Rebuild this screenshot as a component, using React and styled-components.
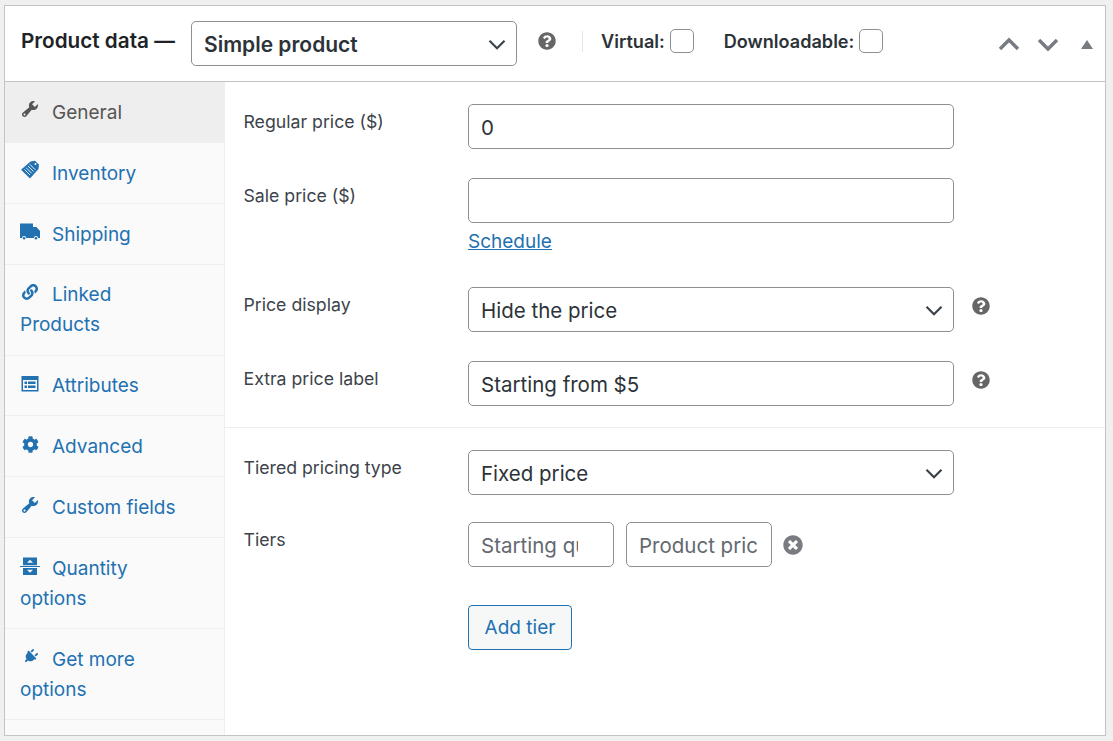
import styled, { createGlobalStyle } from 'styled-components'
import { FaQuestionCircle, FaTimesCircle, FaCog, FaLink, FaPlug } from 'react-icons/fa'

const GlobalStyle = createGlobalStyle`
    html, body {
        margin: 0;
        padding: 0;
        background: #f0f0f1;
        font-family: Inter, "Liberation Sans", sans-serif;
        color: #1d2327;
    }
`

const WrenchIcon = () => (
    <svg viewBox='0 0 20 20' width='20' height='20' fill='currentColor'>
        <path d='M16.68 9.77c-1.34 1.34-3.3 1.67-4.95.99l-5.41 6.52c-.99.99-2.59.99-3.58 0s-.99-2.59 0-3.57l6.52-5.42c-.68-1.65-.35-3.61.99-4.95 1.28-1.28 3.12-1.62 4.72-1.06l-2.89 2.89 2.82 2.82 2.86-2.87c.53 1.58.18 3.39-1.08 4.65zM3.81 16.21c.4.39 1.04.39 1.43 0 .4-.4.4-1.04 0-1.43-.39-.4-1.03-.4-1.43 0-.39.39-.39 1.03 0 1.43z' />
    </svg>
)

const TagIcon = () => (
    <svg viewBox='0 0 20 20' width='20' height='20'>
        <path fill='currentColor' d='M10.500 1.500L15 .800 19 4.500 18.500 9 10 18.500 1 9.800Z' />
        <path stroke='#fafafa' strokeWidth='.9' d='M4.500 9.500L10 15M6.200 7.800L11.700 13.300M8 6L13.500 11.500M9.800 4.300L15.300 9.800' />
        <circle cx='15.500' cy='4' r='1' fill='#fafafa' />
    </svg>
)

const TruckIcon = () => (
    <svg viewBox='0 -1 20 20' width='20' height='20' fill='currentColor'>
        <path d='M0 1.500h13v3.500h3.400l3.600 4v7h-2a2.100 2.100 0 0 0-4.200 0H6.200a2.100 2.100 0 0 0-4.200 0H0z' />
        <circle cx='4.100' cy='16.300' r='1.300' />
        <circle cx='15.900' cy='16.300' r='1.300' />
    </svg>
)

const ListIcon = () => (
    <svg viewBox='0 -1 20 20' width='20' height='20'>
        <path fill='currentColor' d='M1.500 2h17v15.500h-17z' />
        <path fill='#fafafa' d='M3 6h14v10H3z' />
        <path fill='currentColor' d='M4.500 7.500h2.500V10H4.500zM8 7.500h7.500V10H8zM4.500 11.500h2.500V14H4.500zM8 11.500h7.500V14H8z' />
    </svg>
)

const QuantityIcon = () => (
    <svg viewBox='0 -1 20 20' width='20' height='20'>
        <path fill='currentColor' d='M3 .500h14v7.700H3zM3 11h14v7H3zM0 9h20v1H0z' />
        <path fill='#fafafa' d='M10 2.800l3 3H7zM10 15.800l-3-3h6z' />
    </svg>
)

const Chevron = ({ up, size = 24, color = '#787c82', weight = 3.4 }) => (
    <svg viewBox='0 0 24 24' width={size} height={size} fill='none'>
        <path
            stroke={color}
            strokeWidth={weight}
            d={up ? 'M3 17 L12 8 L21 17' : 'M3 8 L12 17 L21 8'}
        />
    </svg>
)

const GearIcon = styled(FaCog)`
    margin-top: 2px;
`

const PlugIcon = styled(FaPlug)`
    transform: rotate(45deg);
`

const tabs = [
    { label: 'General', icon: <WrenchIcon />, active: true },
    { label: 'Inventory', icon: <TagIcon /> },
    { label: 'Shipping', icon: <TruckIcon /> },
    { label: 'Linked Products', icon: <FaLink size={16} /> },
    { label: 'Attributes', icon: <ListIcon /> },
    { label: 'Advanced', icon: <GearIcon size={17} /> },
    { label: 'Custom fields', icon: <WrenchIcon /> },
    { label: 'Quantity options', icon: <QuantityIcon /> },
    { label: 'Get more options', icon: <PlugIcon size={15} /> },
]

const SelectBox = ({ value, big }) => (
    <SelectWrap big={big}>
        <Select big={big} defaultValue={value}>
            <option>{value}</option>
        </Select>
        <SelectArrow>
            <Chevron size={20} color='#3c434a' weight={2.6} />
        </SelectArrow>
    </SelectWrap>
)

export default function App() {
    return (
        <>
            <GlobalStyle />
            <Box>
                <Header>
                    <Title>Product data —</Title>
                    <SelectBox value='Simple product' big />
                    <HeaderHelp>
                        <FaQuestionCircle size={18} />
                    </HeaderHelp>
                    <Divider />
                    <CheckLabel>
                        Virtual:
                        <Checkbox type='checkbox' />
                    </CheckLabel>
                    <CheckLabel>
                        Downloadable:
                        <Checkbox type='checkbox' />
                    </CheckLabel>
                    <Handles>
                        <Chevron up />
                        <Chevron />
                        <Triangle />
                    </Handles>
                </Header>
                <Body>
                    <Sidebar>
                        {tabs.map(tab => (
                            <Tab key={tab.label} active={tab.active}>
                                <TabIcon>{tab.icon}</TabIcon>
                                {tab.label}
                            </Tab>
                        ))}
                    </Sidebar>
                    <Panel>
                        <Section>
                            <Row>
                                <Label>Regular price ($)</Label>
                                <Input defaultValue='0' />
                            </Row>
                            <Row>
                                <Label>Sale price ($)</Label>
                                <Field>
                                    <Input />
                                    <Schedule href='#'>Schedule</Schedule>
                                </Field>
                            </Row>
                            <Row>
                                <Label>Price display</Label>
                                <SelectBox value='Hide the price' />
                                <RowHelp>
                                    <FaQuestionCircle size={18} />
                                </RowHelp>
                            </Row>
                            <Row last>
                                <Label>Extra price label</Label>
                                <Input defaultValue='Starting from $5' />
                                <RowHelp>
                                    <FaQuestionCircle size={18} />
                                </RowHelp>
                            </Row>
                        </Section>
                        <TierSection>
                            <Row tight>
                                <Label>Tiered pricing type</Label>
                                <SelectBox value='Fixed price' />
                            </Row>
                            <Row>
                                <Label>Tiers</Label>
                                <TierInput spinner placeholder='Starting quantity' />
                                <TierInput placeholder='Product price' />
                                <RemoveTier>
                                    <FaTimesCircle size={20} />
                                </RemoveTier>
                            </Row>
                            <AddTier>Add tier</AddTier>
                        </TierSection>
                    </Panel>
                </Body>
            </Box>
        </>
    )
}

const Box = styled.div`
    box-sizing: border-box;
    width: 1102px;
    height: 731px;
    margin: 5px 0 0 4px;
    background: #fff;
    border: 1px solid #c3c4c7;
    display: flex;
    flex-direction: column;
    overflow: hidden;
`

const Header = styled.div`
    box-sizing: border-box;
    height: 76px;
    flex: none;
    display: flex;
    align-items: flex-start;
    padding: 15px 0 0 16px;
    border-bottom: 1px solid #c3c4c7;
`

const Title = styled.div`
    font-size: 20.700px;
    font-weight: 600;
    line-height: 40px;
    margin-right: 16px;
    color: #1d2327;
    white-space: nowrap;
    width: 154px;
`

const SelectWrap = styled.div`
    position: relative;
    width: ${props => (props.big ? '326px' : '486px')};
    height: 45px;
    flex: none;
`

const Select = styled.select`
    appearance: none;
    box-sizing: border-box;
    width: 100%;
    height: 100%;
    padding: 1px 12px 0;
    border: 1px solid #8c8f94;
    border-radius: 5px;
    background: #fff;
    color: #2c3338;
    font-family: inherit;
    font-size: ${props => (props.big ? '21px' : '20.500px')};
    font-weight: ${props => (props.big ? 600 : 400)};
`

const SelectArrow = styled.span`
    position: absolute;
    right: 10px;
    top: 13px;
    display: flex;
    pointer-events: none;
`

const HeaderHelp = styled.span`
    display: flex;
    margin: 11px 0 0 21px;
    color: #666;
`

const Divider = styled.span`
    width: 1px;
    height: 21px;
    margin: 10px 18px 0 26px;
    background: #e6e6e6;
`

const CheckLabel = styled.label`
    display: flex;
    align-items: center;
    gap: 5px;
    height: 24px;
    margin: 8px 30px 0 0;
    font-size: 18.100px;
    font-weight: 600;
    color: #2c3338;
`

const Checkbox = styled.input`
    appearance: none;
    box-sizing: border-box;
    width: 24px;
    height: 24px;
    margin: 0;
    background: #fff;
    border: 1px solid #8c8f94;
    border-radius: 5px;
`

const Handles = styled.div`
    margin: 11px 12px 0 auto;
    display: flex;
    align-items: center;
    gap: 15px;
`

const Triangle = styled.span`
    width: 0;
    height: 0;
    margin-left: 6px;
    border-left: 6px solid transparent;
    border-right: 6px solid transparent;
    border-bottom: 9px solid #787c82;
`

const Body = styled.div`
    flex: 1;
    display: flex;
    min-height: 0;
`

const Sidebar = styled.ul`
    box-sizing: border-box;
    width: 220px;
    flex: none;
    margin: 0;
    padding: 0;
    list-style: none;
    background: #fafafa;
    border-right: 1px solid #eee;
`

const Tab = styled.li`
    padding: 15.800px 35px 14.100px 15px;
    font-size: 19px;
    line-height: 30px;
    border-bottom: 1px solid #eee;
    color: ${props => (props.active ? '#555' : '#2271b1')};
    background: ${props => (props.active ? '#eee' : 'transparent')};
`

const TabIcon = styled.span`
    display: inline-flex;
    justify-content: center;
    align-items: center;
    width: 20px;
    height: 20px;
    margin: 1.600px 12px 0 0;
    vertical-align: top;
`

const Panel = styled.div`
    flex: 1;
    min-width: 0;
`

const Section = styled.div`
    padding: 22px 0 21px 18.500px;
    border-bottom: 1px solid #eee;
`

const TierSection = styled.div`
    padding: 22px 0 0 18.500px;
`

const Row = styled.div`
    display: flex;
    align-items: flex-start;
    margin-bottom: ${props => (props.last ? 0 : props.tight ? '27px' : '29px')};
`

const Label = styled.label`
    width: 224.500px;
    flex: none;
    font-size: 17.700px;
    line-height: 36px;
    color: #3c434a;
`

const Field = styled.div`
    display: flex;
    flex-direction: column;
    align-items: flex-start;
`

const Input = styled.input`
    box-sizing: border-box;
    width: 486px;
    height: 45px;
    padding: 1px 12px 0;
    margin: 0;
    border: 1px solid #8c8f94;
    border-radius: 5px;
    background: #fff;
    color: #2c3338;
    font-family: inherit;
    font-size: 20.500px;
`

const Schedule = styled.a`
    margin: 4px 0 1px;
    font-size: 19px;
    line-height: 30px;
    color: #2271b1;
`

const RowHelp = styled.span`
    display: flex;
    margin: 10px 0 0 18px;
    color: #666;
`

const TierInput = styled(Input)`
    width: 146px;
    margin-right: 12px;
    padding-right: ${props => (props.spinner ? '35px' : '14px')};

    &::placeholder {
        color: #646970;
        opacity: 1;
    }
`

const RemoveTier = styled.span`
    display: flex;
    margin: 13px 0 0 -1px;
    color: #787c82;
`

const AddTier = styled.button`
    display: block;
    box-sizing: border-box;
    width: 104px;
    height: 45px;
    margin: 38px 0 0 224.500px;
    padding: 0;
    border: 1px solid #2271b1;
    border-radius: 4px;
    background: #f6f7f7;
    color: #2271b1;
    font-family: inherit;
    font-size: 19px;
`
